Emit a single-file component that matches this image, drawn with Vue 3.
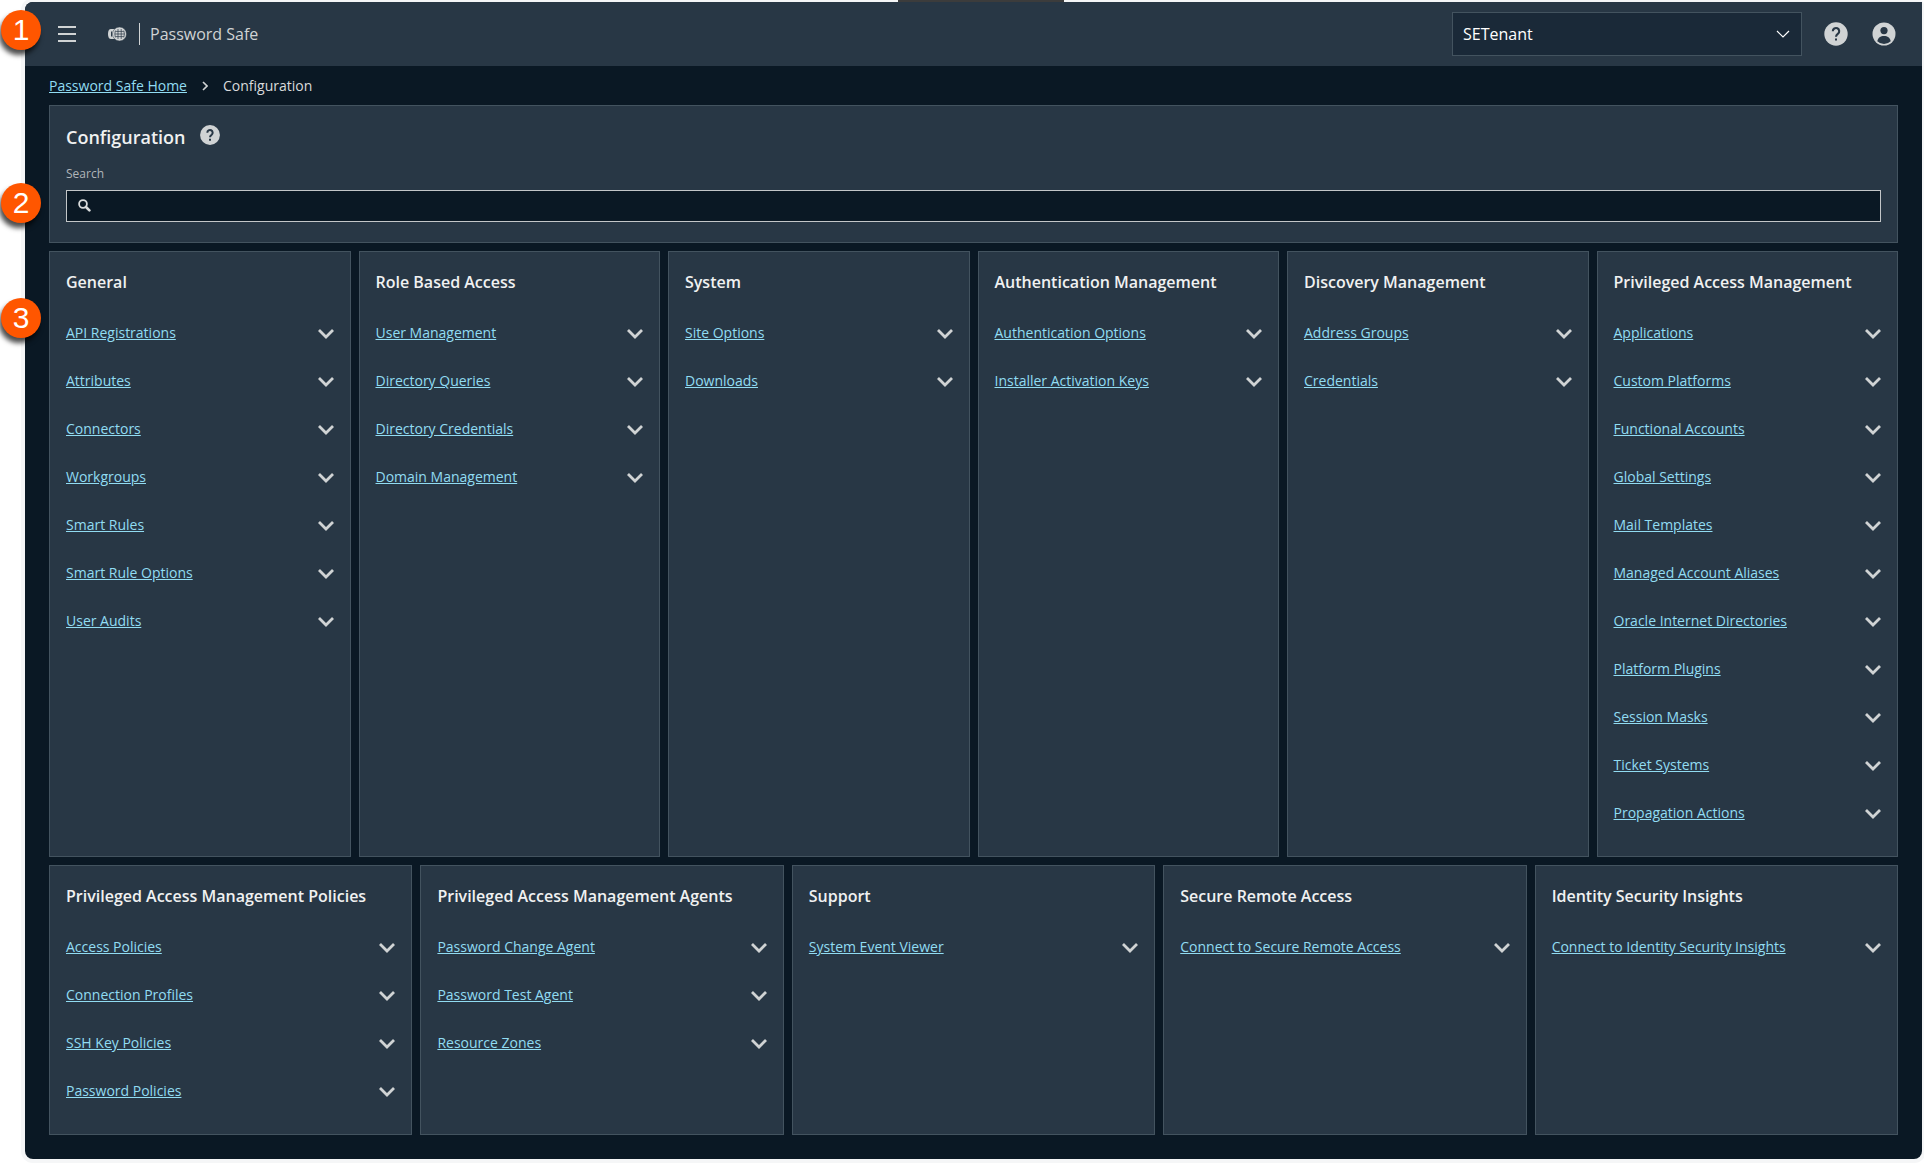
<script setup>
import { ref } from 'vue'

const tenant = ref('SETenant')
const query = ref('')

const topCards = [
  { title: 'General', links: ['API Registrations', 'Attributes', 'Connectors', 'Workgroups', 'Smart Rules', 'Smart Rule Options', 'User Audits'] },
  { title: 'Role Based Access', links: ['User Management', 'Directory Queries', 'Directory Credentials', 'Domain Management'] },
  { title: 'System', links: ['Site Options', 'Downloads'] },
  { title: 'Authentication Management', links: ['Authentication Options', 'Installer Activation Keys'] },
  { title: 'Discovery Management', links: ['Address Groups', 'Credentials'] },
  {
    title: 'Privileged Access Management',
    links: ['Applications', 'Custom Platforms', 'Functional Accounts', 'Global Settings', 'Mail Templates', 'Managed Account Aliases', 'Oracle Internet Directories', 'Platform Plugins', 'Session Masks', 'Ticket Systems', 'Propagation Actions'],
  },
]

const bottomCards = [
  { title: 'Privileged Access Management Policies', links: ['Access Policies', 'Connection Profiles', 'SSH Key Policies', 'Password Policies'] },
  { title: 'Privileged Access Management Agents', links: ['Password Change Agent', 'Password Test Agent', 'Resource Zones'] },
  { title: 'Support', links: ['System Event Viewer'] },
  { title: 'Secure Remote Access', links: ['Connect to Secure Remote Access'] },
  { title: 'Identity Security Insights', links: ['Connect to Identity Security Insights'] },
]

const cardRows = [topCards, bottomCards]
</script>

<template>
  <div class="page">
    <div class="top-tab"></div>
    <div class="window">
      <header class="bar">
        <span class="badge badge-bar">1</span>
        <button class="icon-button menu" type="button" aria-label="Menu">
          <svg width="18" height="16" viewBox="0 0 18 16" fill="#d0d3d4">
            <path d="M0 0h18v2H0zM0 7h18v2H0zM0 14h18v2H0z" />
          </svg>
        </button>
        <svg class="logo" width="19" height="16" viewBox="0 0 19 16">
          <path d="M7 3H3Q0 3 0 8t3 5h4z" fill="#d0d3d4" />
          <path d="M3.6 5.4v5.2M5.6 5v1.6M5.6 9.4V11" stroke="#283745" stroke-width="1.1" />
          <circle cx="11.5" cy="8" r="7" fill="#d0d3d4" stroke="#283745" stroke-width="0.5" />
          <path d="M10 3v10M13.2 3v10M7.4 4.6Q6.2 8 7.4 11.4M15.8 4.6Q17 8 15.8 11.4M7.5 5.4h8.3M7 8h9.4M7.5 10.6h8.3" fill="none" stroke="#283745" stroke-width="0.7" />
        </svg>
        <span class="product">Password Safe</span>
        <div class="tenant">
          <select v-model="tenant" aria-label="Tenant">
            <option>SETenant</option>
          </select>
          <svg class="tenant-arrow" width="14" height="8" viewBox="0 0 14 8" fill="none" stroke="#fff" stroke-width="1.2">
            <path d="M1 1l6 6 6-6" />
          </svg>
        </div>
        <button class="icon-button" type="button" aria-label="Help">
          <svg width="24" height="24" viewBox="0 0 24 24">
            <circle cx="12" cy="12" r="11.7" fill="#d0d3d4" />
            <path d="M8.8 9.2a3.2 3.2 0 1 1 5.2 2.5c-1.2.9-2 1.5-2 3.1" fill="none" stroke="#283745" stroke-width="2.1" />
            <path d="M11 16.6h2v2h-2z" fill="#283745" />
          </svg>
        </button>
        <button class="icon-button" type="button" aria-label="Account">
          <svg width="24" height="24" viewBox="0 0 24 24">
            <circle cx="12" cy="12" r="11.5" fill="#d0d3d4" />
            <circle cx="12" cy="8.6" r="3.6" fill="#283745" />
            <path d="M5.3 19.2C5.9 15.6 8.5 13.9 12 13.9s6.1 1.7 6.7 5.3A9.8 9.8 0 0 1 12 22a9.8 9.8 0 0 1-6.7-2.8z" fill="#283745" />
          </svg>
        </button>
      </header>

      <main class="content">
        <nav class="crumbs" aria-label="Breadcrumb">
          <a href="#">Password Safe Home</a>
          <svg width="6" height="10" viewBox="0 0 6 10" fill="none" stroke="#d0d3d4" stroke-width="1.6">
            <path d="M1 1l4 4-4 4" />
          </svg>
          <span>Configuration</span>
        </nav>

        <section class="panel search-panel">
          <span class="badge badge-search">2</span>
          <div class="heading">
            <h1>Configuration</h1>
            <button class="icon-button heading-help" type="button" aria-label="Configuration help">
              <svg width="20" height="20" viewBox="0 0 24 24">
                <circle cx="12" cy="12" r="11.9" fill="#d0d3d4" />
                <path d="M8.8 9.2a3.2 3.2 0 1 1 5.2 2.5c-1.2.9-2 1.5-2 3.1" fill="none" stroke="#283745" stroke-width="2.4" />
                <path d="M10.8 16.6h2.4v2.2h-2.4z" fill="#283745" />
              </svg>
            </button>
          </div>
          <label for="config-search">Search</label>
          <div class="search">
            <svg class="search-icon" width="13" height="13" viewBox="0 0 13 13" fill="none" stroke="#d9dbdc">
              <circle cx="5" cy="5" r="3.9" stroke-width="1.8" />
              <path d="M8 8l3.4 3.4" stroke-width="2.6" stroke-linecap="round" />
            </svg>
            <input id="config-search" v-model="query" type="text" />
          </div>
        </section>

        <div class="cards">
          <span class="badge badge-cards">3</span>
          <div v-for="(row, i) in cardRows" :key="i" class="card-row">
            <section v-for="card in row" :key="card.title" class="panel card">
              <h2>{{ card.title }}</h2>
              <ul>
                <li v-for="link in card.links" :key="link">
                  <a href="#">{{ link }}</a>
                  <button class="icon-button expand" type="button" :aria-label="'Expand ' + link">
                    <svg width="16" height="10" viewBox="0 0 16 10" fill="none" stroke="#d0d3d4" stroke-width="2.8">
                      <path d="M1 1l7 7 7-7" />
                    </svg>
                  </button>
                </li>
              </ul>
            </section>
          </div>
        </div>
      </main>
    </div>
  </div>
</template>

<style>
body {
  margin: 0;
  background: #fff;
}
</style>

<style scoped>
* {
  box-sizing: border-box;
}
.page {
  position: relative;
  padding: 2px 2px 4px 25px;
  font: 14px/20px "Open Sans", "Noto Sans", sans-serif;
  color: #d9dbdc;
}
.top-tab {
  position: absolute;
  top: 0;
  left: 50%;
  width: 166px;
  height: 2px;
  margin-left: -64px;
  background: #3c3c3c;
}
.window {
  border-radius: 8px;
  background: #0a1824;
  box-shadow: 0 0 0 4px #f5f6f7;
}
.bar {
  position: relative;
  display: flex;
  align-items: center;
  height: 64px;
  padding: 0 26px 0 33px;
  border-radius: 8px 0 0 0;
  background: #283745;
}
.icon-button {
  display: flex;
  padding: 0;
  border: 0;
  background: none;
  cursor: pointer;
}
.logo {
  margin: 0 12px 0 32px;
}
.product {
  padding-left: 10px;
  border-left: 1px solid #d0d3d4;
  font-size: 16px;
  line-height: 22px;
  color: #d0d3d4;
}
.tenant {
  position: relative;
  width: 350px;
  margin-left: auto;
}
.tenant select {
  display: block;
  width: 100%;
  height: 44px;
  padding: 0 10px;
  border: 1px solid #43535f;
  border-radius: 0;
  background: #1a2938;
  color: #fff;
  font: inherit;
  font-size: 16px;
  appearance: none;
}
.tenant-arrow {
  position: absolute;
  top: 18px;
  right: 12px;
  pointer-events: none;
}
.tenant + .icon-button {
  margin: 0 24px 0 22px;
}
.content {
  padding: 0 24px 24px;
}
.crumbs {
  display: flex;
  align-items: center;
  gap: 15px;
  height: 39px;
}
a {
  color: #91dcf2;
  text-decoration: underline;
  text-underline-offset: 1px;
}
.panel {
  border: 1px solid #43535f;
  background: #283745;
}
.search-panel {
  position: relative;
  padding: 16px 16px 20px;
}
.heading {
  display: flex;
  align-items: center;
  gap: 14px;
  height: 30px;
  margin-bottom: 12px;
}
h1 {
  margin: 0;
  font-size: 18px;
  font-weight: 600;
  color: #f0f1f1;
}
.heading-help {
  padding-bottom: 4px;
}
label {
  display: block;
  margin-bottom: 6px;
  font-size: 12px;
  color: #b0b5b9;
}
.search {
  position: relative;
}
.search-icon {
  position: absolute;
  top: 9px;
  left: 12px;
  pointer-events: none;
}
.search input {
  display: block;
  width: 100%;
  height: 32px;
  padding: 0 12px 0 36px;
  border: 1px solid #c3c6c8;
  border-radius: 0;
  background: #0a1824;
  color: #fff;
  font: inherit;
}
.cards {
  position: relative;
  display: flex;
  flex-direction: column;
  gap: 8px;
  margin-top: 8px;
}
.card-row {
  display: flex;
  gap: 8px;
}
.card {
  flex: 1 1 0;
  min-width: 0;
  padding: 16px 16px 19px;
}
h2 {
  margin: 0 0 13px;
  font-size: 16px;
  font-weight: 600;
  line-height: 28px;
  white-space: nowrap;
  color: #f0f1f1;
}
ul {
  margin: 0;
  padding: 0;
  list-style: none;
}
li {
  display: flex;
  align-items: center;
  justify-content: space-between;
  height: 48px;
}
.expand {
  padding-top: 2px;
}
.badge {
  position: absolute;
  left: -48px;
  z-index: 1;
  width: 40px;
  height: 40px;
  border-radius: 50%;
  background: #ff5600;
  box-shadow: -2px 5px 5px rgba(0, 0, 0, 0.7);
  color: #fff;
  font: 30px/40px "Liberation Sans", Arial, sans-serif;
  text-align: center;
}
.badge-bar {
  top: 8px;
  left: -24px;
}
.badge-search {
  top: 77px;
  left: -49px;
}
.badge-cards {
  top: 47px;
}
</style>
